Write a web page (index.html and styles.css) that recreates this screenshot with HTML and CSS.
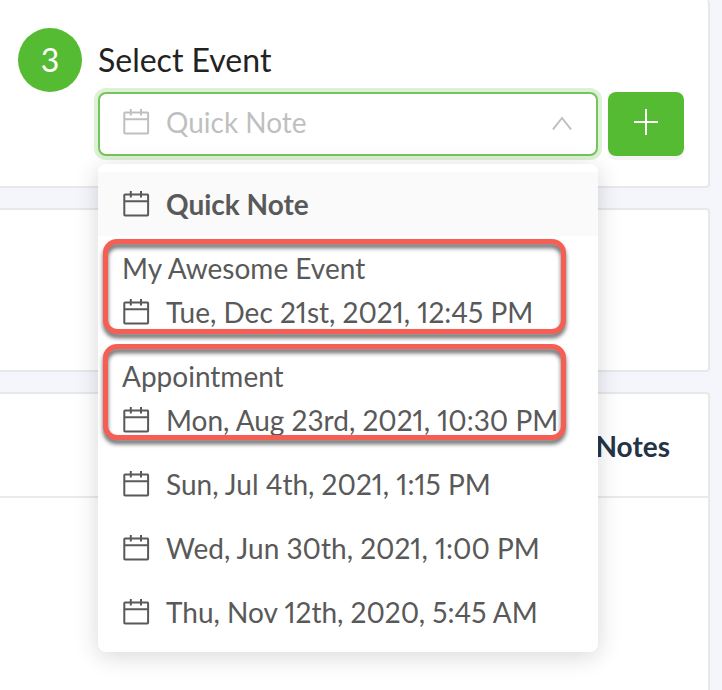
FILE: index.html
```html
<!DOCTYPE html>
<html lang="en">
<head>
<meta charset="utf-8">
<meta name="viewport" content="width=device-width, initial-scale=1">
<title>Select Event</title>
<link rel="stylesheet" href="styles.css">
</head>
<body>
<svg class="sprite" aria-hidden="true">
  <symbol id="calendar" viewBox="0 0 28 28">
    <rect x="2.3" y="4.4" width="23.8" height="21.2" rx="0.8"/>
    <path d="M2.3 11.2H26.1M8.8 1V7.4M19 1V7.4"/>
  </symbol>
</svg>
<main class="page">
  <section class="card step">
    <span class="step-number">3</span>
    <h2 class="step-title" id="event-label">Select Event</h2>
    <div class="controls">
      <div class="select">
        <button class="select-trigger" type="button" role="combobox" aria-expanded="true" aria-controls="event-list" aria-labelledby="event-label">
          <svg class="icon"><use href="#calendar"/></svg>
          <span class="placeholder">Quick Note</span>
          <svg class="chevron" viewBox="0 0 20 14"><path d="M1 13.4L10 2L19 13.4"/></svg>
        </button>
        <ul class="menu" id="event-list" role="listbox" aria-labelledby="event-label">
          <li class="option selected" role="option" aria-selected="true">
            <span class="line"><svg class="icon"><use href="#calendar"/></svg>Quick Note</span>
          </li>
          <li class="option marked marked-first" role="option">
            <span class="line">My Awesome Event</span>
            <span class="line"><svg class="icon"><use href="#calendar"/></svg>Tue, Dec 21st, 2021, 12:45 PM</span>
          </li>
          <li class="option marked" role="option">
            <span class="line">Appointment</span>
            <span class="line"><svg class="icon"><use href="#calendar"/></svg>Mon, Aug 23rd, 2021, 10:30 PM</span>
          </li>
          <li class="option" role="option">
            <span class="line"><svg class="icon"><use href="#calendar"/></svg>Sun, Jul 4th, 2021, 1:15 PM</span>
          </li>
          <li class="option" role="option">
            <span class="line"><svg class="icon"><use href="#calendar"/></svg>Wed, Jun 30th, 2021, 1:00 PM</span>
          </li>
          <li class="option" role="option">
            <span class="line"><svg class="icon"><use href="#calendar"/></svg>Thu, Nov 12th, 2020, 5:45 AM</span>
          </li>
        </ul>
      </div>
      <button class="add" type="button" aria-label="Add event">
        <svg class="plus" viewBox="0 0 28 28"><path d="M14 1V27M2 14H26"/></svg>
      </button>
    </div>
  </section>
  <section class="card blank"></section>
  <section class="card notes">
    <table class="notes-table">
      <thead><tr><th scope="col">Notes</th></tr></thead>
    </table>
  </section>
</main>
</body>
</html>
```
FILE: styles.css
```css
* {
  box-sizing: border-box;
}

body {
  margin: 0;
  background: #f4f6fb;
  color: #595959;
  font-family: Lato, "Liberation Sans", sans-serif;
  font-size: 28px;
  line-height: 44px;
}

button {
  margin: 0;
  font: inherit;
  cursor: pointer;
}

svg {
  flex: none;
  fill: none;
  stroke: currentColor;
  stroke-width: 2;
}

.sprite {
  display: none;
}

.page {
  display: flex;
  flex-direction: column;
  gap: 20px;
  min-height: 100vh;
  padding-right: 12px;
}

.card {
  background: #fff;
  border: 2px solid #e8e8e8;
  border-left: 0;
  border-radius: 0 4px 4px 0;
}

.step {
  display: grid;
  grid-template-columns: 64px 1fr;
  column-gap: 16px;
  align-items: center;
  padding: 28px 24px 30px 18px;
  border-top: 0;
}

.step-number {
  height: 64px;
  border-radius: 50%;
  background: #55bb33;
  color: #fff;
  font-size: 32px;
  line-height: 64px;
  text-align: center;
}

.step-title {
  margin: 0;
  color: #222;
  font-size: 32px;
  font-weight: 400;
}

.controls {
  grid-column: 2;
  display: flex;
  gap: 10px;
}

.select {
  position: relative;
  flex: 1;
}

.select-trigger {
  display: flex;
  align-items: center;
  gap: 16px;
  width: 100%;
  height: 64px;
  padding: 0 24px 4px 22px;
  background: #fff;
  border: 2px solid #76c45c;
  border-radius: 8px;
  box-shadow: 0 0 0 4px #ddf1d6;
  color: #bfbfbf;
  text-align: left;
}

.placeholder {
  flex: 1;
}

.icon {
  width: 28px;
  height: 28px;
}

.chevron {
  width: 20px;
  height: 14px;
  margin-top: 2px;
}

.menu {
  position: absolute;
  top: calc(100% + 8px);
  left: 0;
  right: 0;
  z-index: 1;
  margin: 0;
  padding: 8px 0;
  background: #fff;
  border-radius: 8px;
  box-shadow: 0 4px 24px rgba(0, 0, 0, 0.16);
  font-variant-numeric: proportional-nums;
  list-style: none;
}

.option {
  position: relative;
  padding: 10px 24px;
  white-space: nowrap;
}

.selected {
  background: #fafafa;
  font-weight: 700;
}

.line {
  display: flex;
  align-items: center;
  gap: 16px;
}

.marked::after {
  content: "";
  position: absolute;
  inset: 0 32px 12px 5px;
  border: 5px solid #f65e53;
  border-radius: 14px;
  filter: drop-shadow(0 4px 2px rgba(0, 0, 0, 0.6));
}

.marked-first::after {
  inset: 3px 32px 10px 5px;
}

.add {
  display: grid;
  place-items: center;
  width: 76px;
  height: 64px;
  padding: 0 0 4px;
  background: #55bb33;
  border: 0;
  border-radius: 8px;
  box-shadow: 0 4px 0 #f5f5f5;
  color: #fff;
}

.plus {
  width: 28px;
  height: 28px;
}

.blank {
  height: 164px;
}

.notes {
  flex: 1;
  border-bottom: 0;
  border-bottom-right-radius: 0;
}

.notes-table {
  width: 100%;
  border-collapse: collapse;
}

.notes-table th {
  padding: 30px 38px 28px 0;
  border-bottom: 2px solid #e8eaec;
  color: #243447;
  font-size: 28px;
  font-weight: 700;
  text-align: right;
}
```
